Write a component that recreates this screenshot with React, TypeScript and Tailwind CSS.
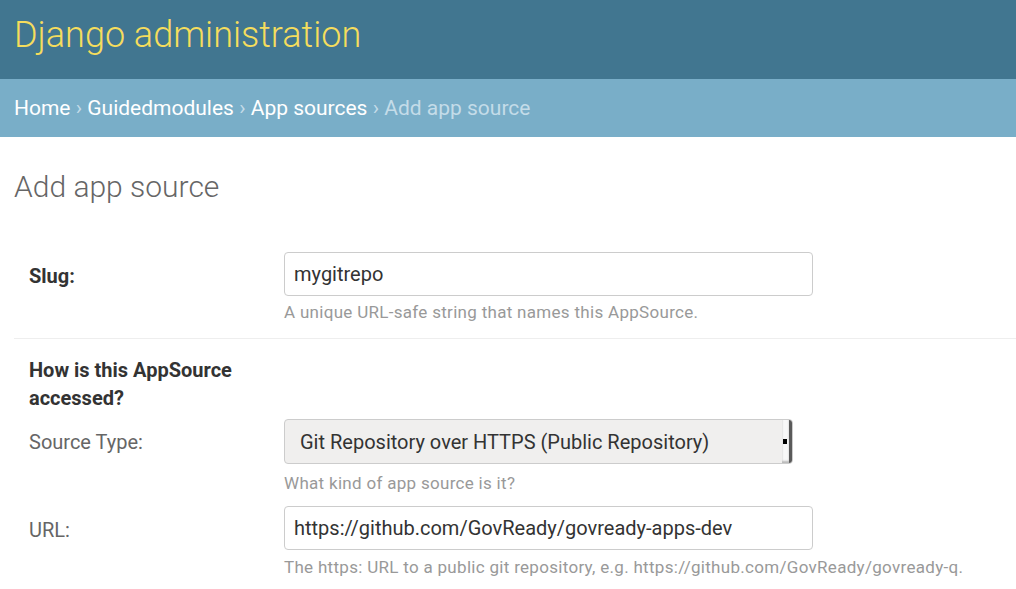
export default function App() {
  return (
    <div className="min-h-[589px] bg-white font-['Roboto','Liberation_Sans',sans-serif]">
      <div className="h-[79px] bg-[#417690] px-[14px] pt-[14px]">
        <h1 className="text-[36px] font-light leading-[43px] text-[#f5dd5d]">Django administration</h1>
      </div>
      <div className="h-[58px] bg-[#79aec8] px-[14px] pt-[14px] text-[21px] leading-[30px] text-[#c4dce8]">
        <span className="text-white">Home</span> › <span className="text-white">Guidedmodules</span> ›{' '}
        <span className="text-white">App sources</span> › Add app source
      </div>
      <div className="pl-[14px]">
        <h2 className="mt-[32px] text-[30px] font-light leading-[36px] text-[#666]">Add app source</h2>
        <div className="mt-[32px]">
          <div className="flex border-b border-[#eee] pt-[15px] pb-[15px]">
            <div className="w-[270px] pl-[15px] pt-[2px] text-[20px] font-bold leading-[44px] text-[#333]">Slug:</div>
            <div>
              <div className="flex h-[44px] w-[529px] items-center rounded-[4px] border border-[#ccc] px-[9px] text-[20px] text-[#333]">
                mygitrepo
              </div>
              <p className="mt-[5px] text-[17px] leading-[22px] tracking-[0.3px] text-[#999]">
                A unique URL-safe string that names this AppSource.
              </p>
            </div>
          </div>
          <h3 className="w-[270px] pl-[15px] pt-[17px] text-[20px] font-bold leading-[28px] text-[#333]">
            How is this AppSource accessed?
          </h3>
          <div className="mt-[7px] flex">
            <div className="w-[270px] pl-[15px] pt-[1px] text-[20px] leading-[45px] text-[#666]">Source Type:</div>
            <div>
              <div className="flex h-[45px] w-[509px] items-center justify-between overflow-hidden rounded-[4px] border border-[#ccc] bg-[#f0efee] pl-[15px] text-[20px] text-[#333]">
                <span>Git Repository over HTTPS (Public Repository)</span>
                <div className="flex h-full w-[10px] items-center justify-start border-r-[3px] border-[#5a5a5a] bg-[#f8f8f8] pl-[1px] shadow-[inset_0_-2px_2px_rgba(0,0,0,0.25)]">
                  <div className="h-[5px] w-[4px] bg-black" />
                </div>
              </div>
              <p className="mt-[8px] text-[17px] leading-[22px] tracking-[0.3px] text-[#999]">What kind of app source is it?</p>
            </div>
          </div>
          <div className="mt-[12px] flex">
            <div className="w-[270px] pl-[15px] pt-[2px] text-[20px] leading-[44px] text-[#666]">URL:</div>
            <div>
              <div className="flex h-[44px] w-[529px] items-center rounded-[4px] border border-[#ccc] px-[9px] text-[20px] text-[#333]">
                https://github.com/GovReady/govready-apps-dev
              </div>
              <p className="mt-[6px] text-[17px] leading-[22px] tracking-[0.3px] text-[#999]">
                The https: URL to a public git repository, e.g. https://github.com/GovReady/govready-q.
              </p>
            </div>
          </div>
        </div>
      </div>
    </div>
  );
}
